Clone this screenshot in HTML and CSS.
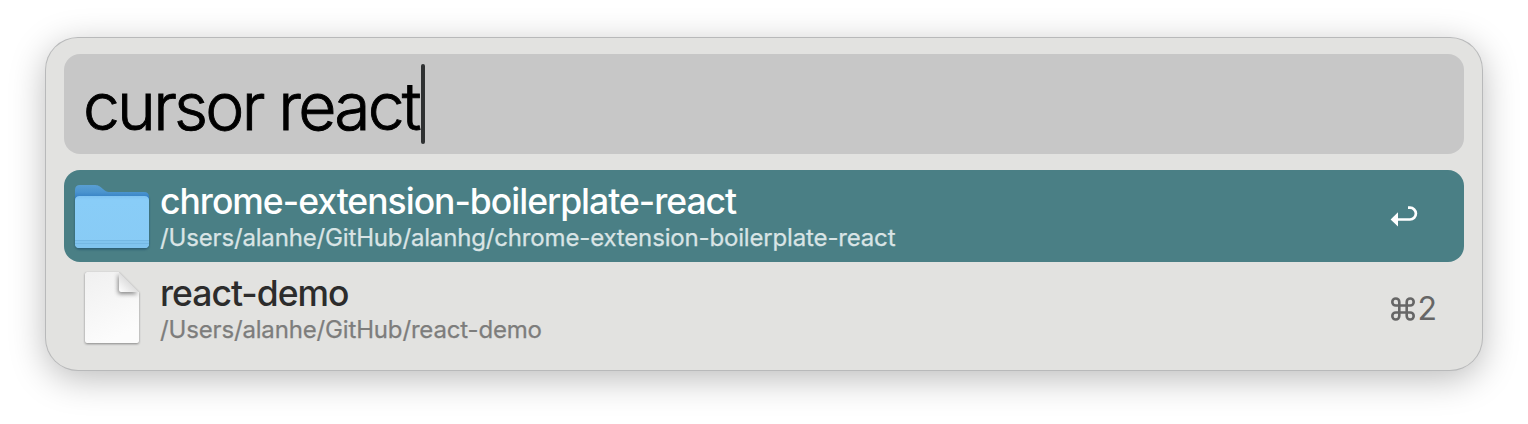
FILE: index.html
```
<!DOCTYPE html>
<html lang="en">
<head>
<meta charset="utf-8">
<title>Launcher</title>
<link rel="stylesheet" href="styles.css">
</head>
<body>
<main class="panel">
  <div class="search"><span class="query">cursor react</span><span class="caret"></span></div>
  <ul class="results">
    <li class="row selected">
      <svg class="icon" viewBox="0 0 76 76">
        <defs>
          <linearGradient id="back" x1="0" y1="0" x2="0" y2="1"><stop offset="0" stop-color="#5a9fd2"/><stop offset=".4" stop-color="#4a94cf"/><stop offset=".7" stop-color="#3580c4"/></linearGradient>
          <linearGradient id="front" x1="0" y1="0" x2="0" y2="1"><stop offset="0" stop-color="#7fc3f1"/><stop offset=".08" stop-color="#89cdf8"/><stop offset="1" stop-color="#88cbf5"/></linearGradient>
        </defs>
        <path class="folder-shade" d="M1 20H75V66.500q0 5-5 5H6q-5 0-5-5Z"/>
        <path fill="url(#back)" d="M1 24V12q0-5 5-5H20c4 0 5 .8 7.500 2.800l3 2.400c2 1.600 3.500 1.800 6 1.800H70q5 0 5 5v6Z"/>
        <path fill="url(#front)" d="M1 22.500q0-4.500 4.500-4.500h65q4.500 0 4.500 4.500V65.500q0 4.500-4.500 4.500h-65Q1 70 1 65.500Z"/>
        <path fill="#80c4ef" d="M1 62h74v3.500q0 4.500-4.500 4.500h-65Q1 70 1 65.500Z"/>
        <path fill="none" stroke="#74b8e4" d="M1 62.500H75M1 65.500H75"/>
      </svg>
      <div class="text">
        <div class="title">chrome-extension-boilerplate-react</div>
        <div class="path">/Users/alanhe/GitHub/alanhg/chrome-extension-boilerplate-react</div>
      </div>
      <svg class="return" viewBox="0 0 28 22">
        <path fill="none" stroke="#fff" stroke-width="2.700" d="M7 14.500H20a5.900 5.900 0 0 0 0-11.800H18"/>
        <path fill="#fff" d="M.6 14.500 8 7.200V21.500Z"/>
      </svg>
    </li>
    <li class="row">
      <svg class="icon" viewBox="0 0 76 76">
        <defs>
          <linearGradient id="sheet" x1="0" y1="0" x2=".4" y2="1"><stop offset="0" stop-color="#f0f0f0"/><stop offset="1" stop-color="#fcfcfc"/></linearGradient>
          <linearGradient id="fold" x1="0" y1="1" x2="1" y2="0"><stop offset="0" stop-color="#fff"/><stop offset=".5" stop-color="#dedede"/></linearGradient>
          <clipPath id="page"><path d="M11 4q0-2 2-2H45L65 22V71q0 2-2 2H13q-2 0-2-2Z"/></clipPath>
        </defs>
        <path class="page-shade" d="M11 4q0-2 2-2H45L65 22V71q0 2-2 2H13q-2 0-2-2Z"/>
        <g clip-path="url(#page)">
          <path fill="url(#sheet)" d="M11 2H65V73H11Z"/>
          <path class="fold-shade" d="M45 2V20q0 2 2 2H65Z"/>
        </g>
        <path fill="url(#fold)" d="M45 2V20q0 2 2 2H65Z"/>
      </svg>
      <div class="text">
        <div class="title">react-demo</div>
        <div class="path">/Users/alanhe/GitHub/react-demo</div>
      </div>
      <div class="shortcut">
        <svg class="command" viewBox="0 0 24 24"><path fill="none" stroke="#666" stroke-width="2.600" d="M8.300 5V19a3.500 3.500 0 1 1-3.500-3.500H19.200a3.500 3.500 0 1 1-3.500 3.500V5a3.500 3.500 0 1 1 3.500 3.500H4.800A3.500 3.500 0 1 1 8.300 5Z"/></svg>
        <span>2</span>
      </div>
    </li>
  </ul>
</main>
</body>
</html>
```
FILE: styles.css
```
* { box-sizing: border-box; }
body {
  margin: 0;
  height: 424px;
  padding: 38px 46px;
  background: #fff;
  font-family: Inter, "Liberation Sans", sans-serif;
  overflow: hidden;
}
.panel {
  height: 332px;
  padding: 16px 18px;
  border-radius: 32px;
  background: #e2e2e0;
  box-shadow: 0 0 0 1px #b8b9ba, 0 8px 36px rgba(0,0,0,.28);
}
.search {
  display: flex;
  align-items: center;
  height: 100px;
  padding-left: 19px;
  border-radius: 16px;
  background: #c7c7c7;
}
.query {
  width: 338px;
  padding-top: 4px;
  font-size: 66px;
  line-height: 80px;
  font-weight: 300;
  letter-spacing: -2.8px;
  -webkit-text-stroke: .9px #000;
  white-space: nowrap;
  color: #000;
}
.caret {
  width: 4px;
  height: 80px;
  border-radius: 2px;
  background: #2f3132;
}
.results { list-style: none; margin: 16px 0 0; padding: 0; }
.row {
  display: flex;
  align-items: center;
  height: 92px;
  padding: 0 28px 0 10px;
  border-radius: 16px;
  color: #2c2c2c;
}
.selected { background: #4a7f85; color: #fff; }
.icon { width: 76px; height: 76px; margin-right: 10px; overflow: visible; }
.folder-shade { fill: #285a70; filter: blur(1px); }
.page-shade { fill: #aaa; filter: drop-shadow(0 1px 1px rgba(0,0,0,.4)); }
.fold-shade { fill: #999; filter: drop-shadow(-1px 2px 2px rgba(0,0,0,.45)); }
.text { flex: 1; padding-top: 2px; white-space: nowrap; }
.title { font-size: 35.500px; line-height: 42px; font-weight: 500; letter-spacing: -1px; }
.path { font-size: 24px; line-height: 30px; letter-spacing: -.16px; -webkit-text-stroke: .25px currentColor; color: #7d7d7c; }
.selected .path { color: #d9e4e5; }
.return { width: 28px; height: 22px; margin-right: 18px; }
.shortcut {
  display: flex;
  align-items: center;
  gap: 2px;
  padding-top: 1px;
  color: #666;
  font-size: 32px;
  font-weight: 400;
  letter-spacing: -1px;
  line-height: 40px;
}
.command { width: 24px; height: 24px; }
```
